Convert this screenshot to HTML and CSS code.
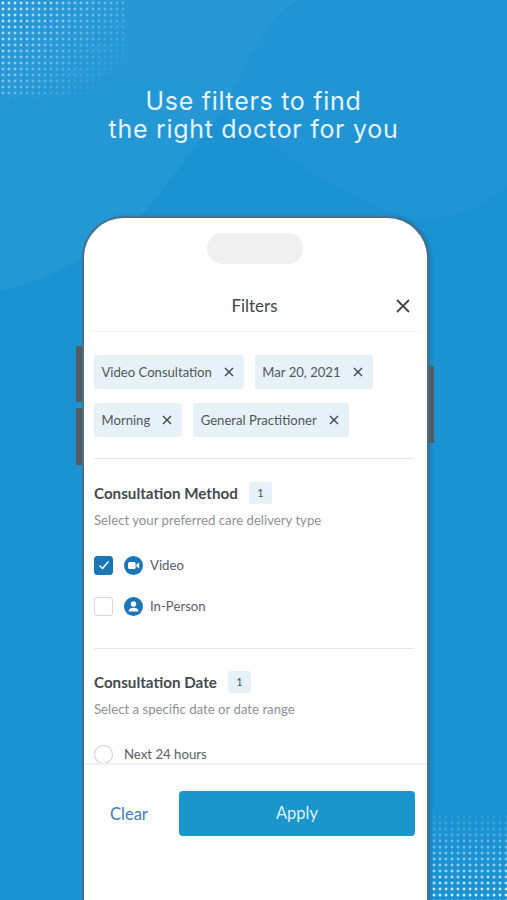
FILE: index.html
```html
<!DOCTYPE html>
<html>
	<head>
		<meta charset="UTF-8">
		<title>Filters</title>
		<link rel="stylesheet" href="styles.css">
	</head>
	<body>
		<div class="page">
			<svg class="shapes" width="507" height="900" viewBox="0 0 507 900">
				<path d="M0 0H298C262 22 250 58 232 92C212 132 192 150 150 206C128 232 62 278 0 291Z" fill="#2b9ad7" opacity=".55"/>
				<path d="M0 0H298C262 22 250 58 232 92C205 82 140 70 90 78C50 84 20 92 0 96Z" fill="#2f9cd9" opacity=".35"/>
				<path d="M268 143C310 170 370 218 430 218C465 218 490 200 507 186V0H298C262 22 250 58 232 92C212 132 240 125 268 143Z" fill="#2b9ad7" opacity=".45"/>
			</svg>
			<div class="dots dots-top"></div>
			<div class="dots dots-bottom"></div>

			<h1 class="title">Use filters to find<br>the right doctor for you</h1>

			<div class="phone">
				<span class="side side-l1"></span>
				<span class="side side-l2"></span>
				<span class="side side-r"></span>
				<div class="notch"></div>
				<div class="head">
					<span class="head-title">Filters</span>
					<svg class="head-close" width="14" height="14" viewBox="0 0 14 14"><path d="M1 1L13 13M13 1L1 13"/></svg>
				</div>
				<div class="scroll">
					<div class="chips">
						<div class="chip">Video Consultation <svg width="10" height="10" viewBox="0 0 10 10"><path d="M1 1L9 9M9 1L1 9"/></svg></div>
						<div class="chip">Mar 20, 2021 <svg width="10" height="10" viewBox="0 0 10 10"><path d="M1 1L9 9M9 1L1 9"/></svg></div>
						<div class="chip">Morning <svg width="10" height="10" viewBox="0 0 10 10"><path d="M1 1L9 9M9 1L1 9"/></svg></div>
						<div class="chip">General Practitioner <svg width="10" height="10" viewBox="0 0 10 10"><path d="M1 1L9 9M9 1L1 9"/></svg></div>
					</div>
					<div class="section">
						<div class="sec-head"><h2>Consultation Method</h2><span class="badge">1</span></div>
						<p class="sub">Select your preferred care delivery type</p>
						<div class="opt opt-first">
							<span class="check on"><svg width="12" height="10" viewBox="0 0 12 10"><path d="M1.5 5.5L4.5 8.5L10.5 1.5"/></svg></span>
							<svg class="opt-icon" width="19" height="19" viewBox="0 0 19 19"><circle cx="9.5" cy="9.5" r="9.5" fill="#1a76b5"/><rect x="4" y="6" width="7.6" height="7" rx="1.6" fill="#fff"/><path d="M12.4 8.6L15.2 6.6V12.4L12.4 10.4Z" fill="#fff"/></svg>
							<span class="opt-label">Video</span>
						</div>
						<div class="opt">
							<span class="check"></span>
							<svg class="opt-icon" width="19" height="19" viewBox="0 0 19 19"><circle cx="9.5" cy="9.5" r="9.5" fill="#1a76b5"/><circle cx="9.5" cy="7" r="2.7" fill="#fff"/><path d="M4.6 14.4C4.6 11.8 7 10.7 9.5 10.7S14.4 11.8 14.4 14.4Z" fill="#fff"/></svg>
							<span class="opt-label">In-Person</span>
						</div>
					</div>
					<div class="section section-date">
						<div class="sec-head"><h2>Consultation Date</h2><span class="badge">1</span></div>
						<p class="sub">Select a specific date or date range</p>
						<div class="opt opt-radio">
							<span class="radio"></span>
							<span class="opt-label">Next 24 hours</span>
						</div>
					</div>
				</div>
				<div class="foot">
					<a class="clear">Clear</a>
					<a class="apply">Apply</a>
				</div>
			</div>
		</div>
	</body>
</html>
```

FILE: styles.css
```css
html, body{
	margin: 0;
	padding: 0;
}
.page{
	position: relative;
	width: 507px;
	height: 900px;
	overflow: hidden;
	background: #1b93d2;
	font-family: "Lato", "Open Sans", sans-serif;
	color: #4a5056;
}
.shapes{
	position: absolute;
	top: 0;
	left: 0;
}
.dots{
	position: absolute;
	background-image: radial-gradient(circle, #fff 0, #fff 1.1px, transparent 1.8px);
	background-size: 6px 6px;
	filter: blur(.3px);
}
.dots-top{
	top: 0;
	left: 0;
	width: 126px;
	height: 98px;
	-webkit-mask-image: linear-gradient(135deg, rgba(0,0,0,.8) 0, rgba(0,0,0,.25) 55%, transparent 85%);
	mask-image: linear-gradient(135deg, rgba(0,0,0,.8) 0, rgba(0,0,0,.25) 55%, transparent 85%);
}
.dots-bottom{
	right: 0;
	bottom: 0;
	width: 76px;
	height: 92px;
	-webkit-mask-image: linear-gradient(to bottom, transparent 0, rgba(0,0,0,.35) 40%, rgba(0,0,0,.85) 100%);
	mask-image: linear-gradient(to bottom, transparent 0, rgba(0,0,0,.35) 40%, rgba(0,0,0,.85) 100%);
}
.title{
	position: relative;
	margin: 0;
	padding-top: 87px;
	height: 129px;
	text-align: center;
	font: 400 25px/28px "Inter", sans-serif;
	letter-spacing: .7px;
	color: #e4f4fc;
}
.phone{
	position: relative;
	box-sizing: border-box;
	width: 347px;
	height: 720px;
	margin-left: 82px;
	background: #fff;
	border: 2px solid #4a7088;
	border-radius: 42px 42px 0 0;
	box-shadow: 2px 0 3px rgba(20,60,90,.25);
}
.side{
	position: absolute;
	width: 6px;
	background: #555a5e;
}
.side-l1{
	left: -8px;
	top: 128px;
	height: 56px;
}
.side-l2{
	left: -8px;
	top: 190px;
	height: 57px;
}
.side-r{
	right: -7px;
	top: 148px;
	height: 77px;
	width: 5px;
}
.notch{
	width: 96px;
	height: 31px;
	margin: 15px 0 0 123px;
	background: #f0f0f0;
	border-radius: 15px;
}
.head{
	display: flex;
	align-items: center;
	justify-content: center;
	height: 68px;
	padding: 16px 2px 0 0;
	box-sizing: border-box;
	border-bottom: 1px solid #f1f2f3;
	margin: 0 6px;
	position: relative;
}
.head-title{
	font-size: 17px;
	color: #3f454a;
}
.head-close{
	position: absolute;
	right: 11px;
	top: 35px;
}
.head-close path{
	fill: none;
	stroke: #3f454a;
	stroke-width: 1.8;
}
.scroll{
	height: 431px;
	overflow: hidden;
	padding: 0 13px 0 10px;
}
.chips{
	display: flex;
	flex-wrap: wrap;
	gap: 14.5px 11px;
	padding: 23px 0 21.5px;
	border-bottom: 1px solid #e6e8ea;
}
.chip{
	display: flex;
	align-items: center;
	justify-content: space-between;
	gap: 12px;
	height: 33.5px;
	padding: 0 10px 0 7.5px;
	font-size: 13.1px;
	background: #e7f1f8;
	border-radius: 3px;
	color: #50565c;
}
.chip svg path{
	fill: none;
	stroke: #3f454a;
	stroke-width: 1.4;
}
.section{
	padding-bottom: 32px;
	border-bottom: 1px solid #e6e8ea;
}
.section-date{
	border-bottom: none;
}
.sec-head{
	display: flex;
	align-items: center;
	gap: 11px;
	padding-top: 23px;
}
.section-date .sec-head{
	padding-top: 22px;
}
.sec-head h2{
	margin: 0;
	font-size: 15.2px;
	font-weight: 700;
	color: #43494e;
}
.badge{
	width: 23px;
	height: 22px;
	line-height: 22px;
	text-align: center;
	font-size: 11px;
	background: #e7f1f8;
	border-radius: 3px;
}
.sub{
	margin: 6px 0 0;
	font-size: 13.2px;
	line-height: 20px;
	color: #8c9196;
}
.opt{
	display: flex;
	align-items: center;
	margin-top: 21px;
	height: 20px;
}
.opt-first{
	margin-top: 25px;
}
.opt-radio{
	margin-top: 25px;
}
.check{
	box-sizing: border-box;
	display: flex;
	align-items: center;
	justify-content: center;
	width: 19px;
	height: 19px;
	border: 1.5px solid #d4d6d8;
	border-radius: 3px;
}
.check.on{
	background: #1a76b5;
	border-color: #1a76b5;
}
.check path{
	fill: none;
	stroke: #fff;
	stroke-width: 1.4;
}
.opt-icon{
	margin: 0 7px 0 11px;
}
.opt-label{
	font-size: 13.2px;
	color: #5a6066;
}
.radio{
	box-sizing: border-box;
	width: 19px;
	height: 19px;
	margin-right: 11px;
	border: 1.5px solid #c9cbcd;
	border-radius: 50%;
}
.foot{
	display: flex;
	align-items: center;
	height: 99px;
	box-sizing: border-box;
	padding: 0 12px 0 26px;
	border-top: 2px solid #f0f1f2;
	background: #fff;
}
.clear{
	font-size: 16.5px;
	color: #3d80b6;
}
.apply{
	display: block;
	width: 236px;
	height: 45px;
	margin-left: auto;
	line-height: 45px;
	text-align: center;
	font-size: 16.5px;
	color: #dff1fa;
	background: #1a96cc;
	border-radius: 4px;
}
```
